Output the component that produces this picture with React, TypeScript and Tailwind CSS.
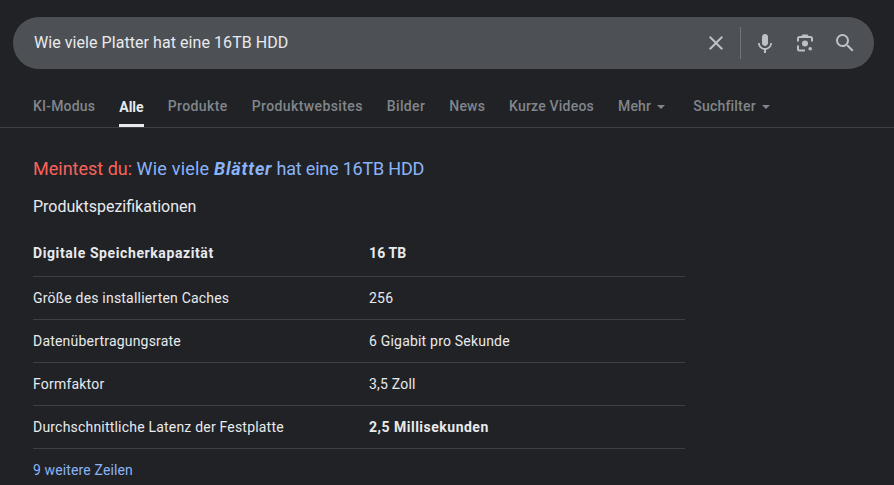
const tabs = [
  { label: "KI-Modus", cls: "" },
  { label: "Alle", active: true, cls: "tracking-[0px]" },
  { label: "Produkte", cls: "tracking-[0.4px]" },
  { label: "Produktwebsites", cls: "tracking-[0.4px]" },
  { label: "Bilder", cls: "tracking-[0.35px]" },
  { label: "News", cls: "" },
  { label: "Kurze Videos", cls: "" },
];

const rows = [
  { k: "Größe des installierten Caches", v: "256" },
  { k: "Datenübertragungsrate", v: "6 Gigabit pro Sekunde" },
  { k: "Formfaktor", v: "3,5 Zoll" },
  { k: "Durchschnittliche Latenz der Festplatte", v: "2,5 Millisekunden", bold: true },
];

function Caret() {
  return <span className="ml-[6px] mt-[1px] h-0 w-0 border-x-[4px] border-t-[4px] border-x-transparent border-t-[#80868b]" />;
}

export default function App() {
  return (
    <div className="h-[485px] w-[894px] overflow-hidden bg-[#212226] font-['Roboto',sans-serif] text-[#e8eaed]">
      <div className="pl-[13px] pr-[20px] pt-[17px]">
        <div className="flex h-[52px] items-center rounded-full bg-[#4d5156] pl-[21px] pr-[17px]">
          <span className="flex-1 text-base tracking-[0.06px] text-[#e8eaed]">Wie viele Platter hat eine 16TB HDD</span>
          <svg width="24" height="24" viewBox="0 0 24 24" fill="#bdc1c6" className="mr-[12px]">
            <path d="M19 6.41 17.59 5 12 10.59 6.41 5 5 6.41 10.59 12 5 17.59 6.41 19 12 13.41 17.59 19 19 17.59 13.41 12z" />
          </svg>
          <div className="mr-[12px] h-[32px] w-px bg-[#70757a]" />
          <svg width="24" height="24" viewBox="0 0 24 24" fill="#bdc1c6" className="mr-[16px]">
            <path d="M12 15c1.66 0 3-1.31 3-2.97V5.97C15 4.31 13.66 3 12 3S9 4.31 9 5.97v6.06C9 13.69 10.34 15 12 15z" />
            <path d="M17.3 12c0 3-2.54 5.1-5.3 5.1S6.7 15 6.7 12H5c0 3.41 2.72 6.23 6 6.72V22h2v-3.28c3.28-.49 6-3.31 6-6.72h-1.7z" />
          </svg>
          <svg width="24" height="24" viewBox="0 0 24 24" fill="#bdc1c6" className="mr-[16px]">
            <circle cx="12" cy="12.500" r="3" />
            <circle cx="17.200" cy="17.700" r="1.800" />
            <path d="M9.500 3.500 8.400 5H6.500A2.500 2.500 0 0 0 4 7.500v3h2v-3a.5.5 0 0 1 .5-.5h11a.5.5 0 0 1 .5.5v3h2v-3A2.500 2.500 0 0 0 17.500 5h-1.900l-1.100-1.500z" />
            <path d="M4 14.500V18a2.500 2.500 0 0 0 2.500 2.500H12v-2H6.500A.5.5 0 0 1 6 18v-3.500z" />
          </svg>
          <svg width="24" height="24" viewBox="0 0 24 24" fill="#bdc1c6">
            <path d="M15.500 14h-.79l-.28-.27A6.471 6.471 0 0 0 16 9.500 6.500 6.500 0 1 0 9.500 16c1.610 0 3.090-.59 4.230-1.570l.27.28v.79l5 4.990L20.490 19l-4.990-5zm-6 0C7.010 14 5 11.990 5 9.500S7.010 5 9.500 5 14 7.010 14 9.500 11.990 14 9.500 14z" />
          </svg>
        </div>
      </div>

      <div className="mt-[17px] flex h-[42px] items-stretch gap-6 border-b border-[#3c4043] pl-[33px] text-sm tracking-[0.2px] text-[#80868b]">
        {tabs.map((t) => (
          <div
            key={t.label}
            className={
              t.active
                ? `flex items-center border-b-[3px] border-[#e8eaed] pt-[3px] font-bold text-[#e8eaed] ${t.cls}`
                : `flex items-center pb-[1px] font-medium ${t.cls}`
            }
          >
            {t.label}
          </div>
        ))}
        <div className="flex items-center pb-[1px] font-medium">
          Mehr
          <Caret />
        </div>
        <div className="ml-[4px] flex items-center pb-[1px] font-medium">
          Suchfilter
          <Caret />
        </div>
      </div>

      <div className="w-[685px] pl-[33px]">
        <div className="mt-[30px] flex h-[22px] items-center whitespace-pre text-lg">
          <span className="text-[#f9625a]">Meintest du: </span>
          <span className="text-[#8ab4f8]">
            <span className="tracking-[0.2px]">Wie viele </span>
            <b className="font-bold italic tracking-[0.8px]">Blätter</b>
            <span className="tracking-[-0.2px]"> hat eine 16TB HDD</span>
          </span>
        </div>
        <div className="mt-[17px] text-base leading-[20px]">Produktspezifikationen</div>

        <div className="mt-[13px] flex h-[47px] items-center border-b border-[#3c4043] text-sm font-bold tracking-[0.6px]">
          <div className="w-[336px]">Digitale Speicherkapazität</div>
          <div className="tracking-[0.1px]">16 TB</div>
        </div>
        {rows.map((r) => (
          <div key={r.k} className="flex h-[43px] items-center border-b border-[#3c4043] text-sm tracking-[0.2px]">
            <div className="w-[336px]">{r.k}</div>
            <div className={r.bold ? "font-bold tracking-[0.5px]" : ""}>{r.v}</div>
          </div>
        ))}
        <div className="mt-[12px] text-sm leading-[18px] tracking-[0.13px] text-[#8ab4f8]">9 weitere Zeilen</div>
      </div>
    </div>
  );
}
